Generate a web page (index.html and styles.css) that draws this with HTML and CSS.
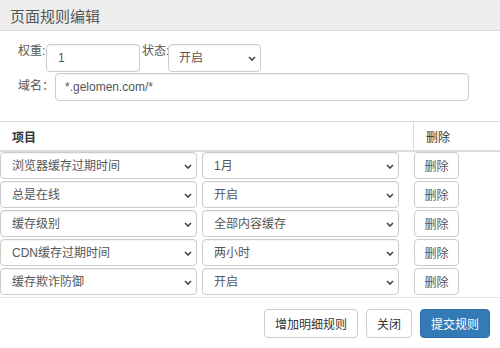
FILE: index.html
```html
<!DOCTYPE html>
<html lang="zh-CN">
  <head>
    <meta charset="UTF-8" />
    <meta name="viewport" content="width=device-width, initial-scale=1.0" />
    <title>页面规则编辑</title>
    <link rel="stylesheet" href="styles.css">
  </head>
  <body>
    <div class="modal">
      <div class="modal-header">
        <h4 class="modal-title">页面规则编辑</h4>
      </div>

      <div class="modal-body">
        <div class="form-row">
          <label for="weight" class="label-weight">权重:</label>
          <input type="text" id="weight" class="form-control weight" value="1" />
          <label for="status" class="label-status">状态:</label>
          <span class="select-wrap status">
            <select id="status" class="form-control">
              <option>开启</option>
              <option>关闭</option>
            </select>
            <svg class="caret" viewBox="0 0 8 5"><path d="M1 1l3 3 3-3" /></svg>
          </span>
        </div>
        <div class="form-row form-row-center">
          <label for="domain">域名：</label>
          <input type="text" id="domain" class="form-control domain" value="*.gelomen.com/*" />
        </div>
      </div>

      <div class="rules">
        <div class="rules-head">
          <div class="head-item">项目</div>
          <div class="head-del">删除</div>
        </div>

        <div class="rule-row">
          <span class="select-wrap">
            <select class="form-control"><option>浏览器缓存过期时间</option></select>
            <svg class="caret" viewBox="0 0 8 5"><path d="M1 1l3 3 3-3" /></svg>
          </span>
          <span class="select-wrap">
            <select class="form-control"><option>1月</option></select>
            <svg class="caret" viewBox="0 0 8 5"><path d="M1 1l3 3 3-3" /></svg>
          </span>
          <button class="btn btn-del">删除</button>
        </div>
        <div class="rule-row">
          <span class="select-wrap">
            <select class="form-control"><option>总是在线</option></select>
            <svg class="caret" viewBox="0 0 8 5"><path d="M1 1l3 3 3-3" /></svg>
          </span>
          <span class="select-wrap">
            <select class="form-control"><option>开启</option></select>
            <svg class="caret" viewBox="0 0 8 5"><path d="M1 1l3 3 3-3" /></svg>
          </span>
          <button class="btn btn-del">删除</button>
        </div>
        <div class="rule-row">
          <span class="select-wrap">
            <select class="form-control"><option>缓存级别</option></select>
            <svg class="caret" viewBox="0 0 8 5"><path d="M1 1l3 3 3-3" /></svg>
          </span>
          <span class="select-wrap">
            <select class="form-control"><option>全部内容缓存</option></select>
            <svg class="caret" viewBox="0 0 8 5"><path d="M1 1l3 3 3-3" /></svg>
          </span>
          <button class="btn btn-del">删除</button>
        </div>
        <div class="rule-row">
          <span class="select-wrap">
            <select class="form-control"><option>CDN缓存过期时间</option></select>
            <svg class="caret" viewBox="0 0 8 5"><path d="M1 1l3 3 3-3" /></svg>
          </span>
          <span class="select-wrap">
            <select class="form-control"><option>两小时</option></select>
            <svg class="caret" viewBox="0 0 8 5"><path d="M1 1l3 3 3-3" /></svg>
          </span>
          <button class="btn btn-del">删除</button>
        </div>
        <div class="rule-row">
          <span class="select-wrap">
            <select class="form-control"><option>缓存欺诈防御</option></select>
            <svg class="caret" viewBox="0 0 8 5"><path d="M1 1l3 3 3-3" /></svg>
          </span>
          <span class="select-wrap">
            <select class="form-control"><option>开启</option></select>
            <svg class="caret" viewBox="0 0 8 5"><path d="M1 1l3 3 3-3" /></svg>
          </span>
          <button class="btn btn-del">删除</button>
        </div>
      </div>

      <div class="modal-footer">
        <button class="btn">增加明细规则</button>
        <button class="btn">关闭</button>
        <button class="btn btn-primary">提交规则</button>
      </div>
    </div>
  </body>
</html>
```

FILE: styles.css
```css
/* General styling */
body {
  margin: 0;
  padding: 0;
  background: #fff;
  font-family: "Liberation Sans", "Noto Sans CJK SC", sans-serif;
  font-size: 12px;
  color: #555;
}

.modal {
  width: 500px;
  height: 348px;
  overflow: hidden;
}

.modal-header {
  height: 30px;
  background: #eee;
  border-bottom: 1px solid #ddd;
  display: flex;
  align-items: center;
  padding: 0 10px;
}

.modal-title {
  margin: 0;
  font-size: 15px;
  font-weight: normal;
  color: #555;
}

.modal-body {
  padding: 13px 0 20px 18px;
  display: flex;
  flex-direction: column;
  gap: 1px;
}

.form-row {
  display: flex;
  align-items: flex-start;
}

.form-row label {
  line-height: 14px;
  white-space: nowrap;
  overflow: hidden;
}

.label-weight {
  width: 28px;
}

.label-status {
  width: 26px;
  margin-left: 2px;
}

.form-row-center {
  align-items: center;
}

.form-row-center label {
  width: 37px;
  margin-bottom: 3px;
}

.form-control {
  box-sizing: border-box;
  height: 28px;
  border: 1px solid #ccc;
  border-radius: 4px;
  background-color: #fff;
  color: #555;
  font-family: inherit;
  font-size: 12px;
  padding: 0 10px;
  margin: 0;
  box-shadow: inset 0 1px 1px rgba(0, 0, 0, 0.05);
}

select.form-control {
  appearance: none;
  -webkit-appearance: none;
  width: 100%;
  padding-right: 20px;
}

/* Custom select with caret */
.select-wrap {
  position: relative;
  display: block;
}

.caret {
  position: absolute;
  right: 5px;
  top: 50%;
  width: 8px;
  height: 5px;
  margin-top: -2px;
  fill: none;
  stroke: #444;
  stroke-width: 1.6;
  pointer-events: none;
}

.weight {
  width: 94px;
  padding-left: 11px;
}

.status {
  width: 93px;
}

.domain {
  width: 414px;
  padding-left: 9px;
}

/* Rules table */
.rules-head {
  display: flex;
  height: 28px;
  border-top: 1px solid #ddd;
  border-bottom: 2px solid #ddd;
  color: #333;
}

.head-item {
  width: 401px;
  padding-left: 12px;
  font-weight: bold;
  display: flex;
  align-items: center;
  border-right: 1px solid #ddd;
}

.head-del {
  padding-left: 12px;
  display: flex;
  align-items: center;
}

.rule-row {
  display: grid;
  grid-template-columns: 197px 197px 45px;
  column-gap: 5px;
  margin-bottom: 2px;
}

.rule-row .form-control {
  height: 27px;
  padding-left: 11px;
}

.btn {
  box-sizing: border-box;
  height: 29px;
  padding: 0 10px;
  border: 1px solid #ccc;
  border-radius: 4px;
  background: #fff;
  color: #333;
  font-family: inherit;
  font-size: 12px;
  cursor: pointer;
}

.btn-del {
  height: 27px;
  width: 45px;
  padding: 0;
  margin-left: 10px;
  color: #555;
}

.btn-primary {
  background: #337ab7;
  border-color: #2e6da4;
  color: #fff;
}

.modal-footer {
  border-top: 1px solid #e5e5e5;
  padding: 11px 10px 10px;
  display: flex;
  justify-content: flex-end;
  gap: 8px;
}
```
